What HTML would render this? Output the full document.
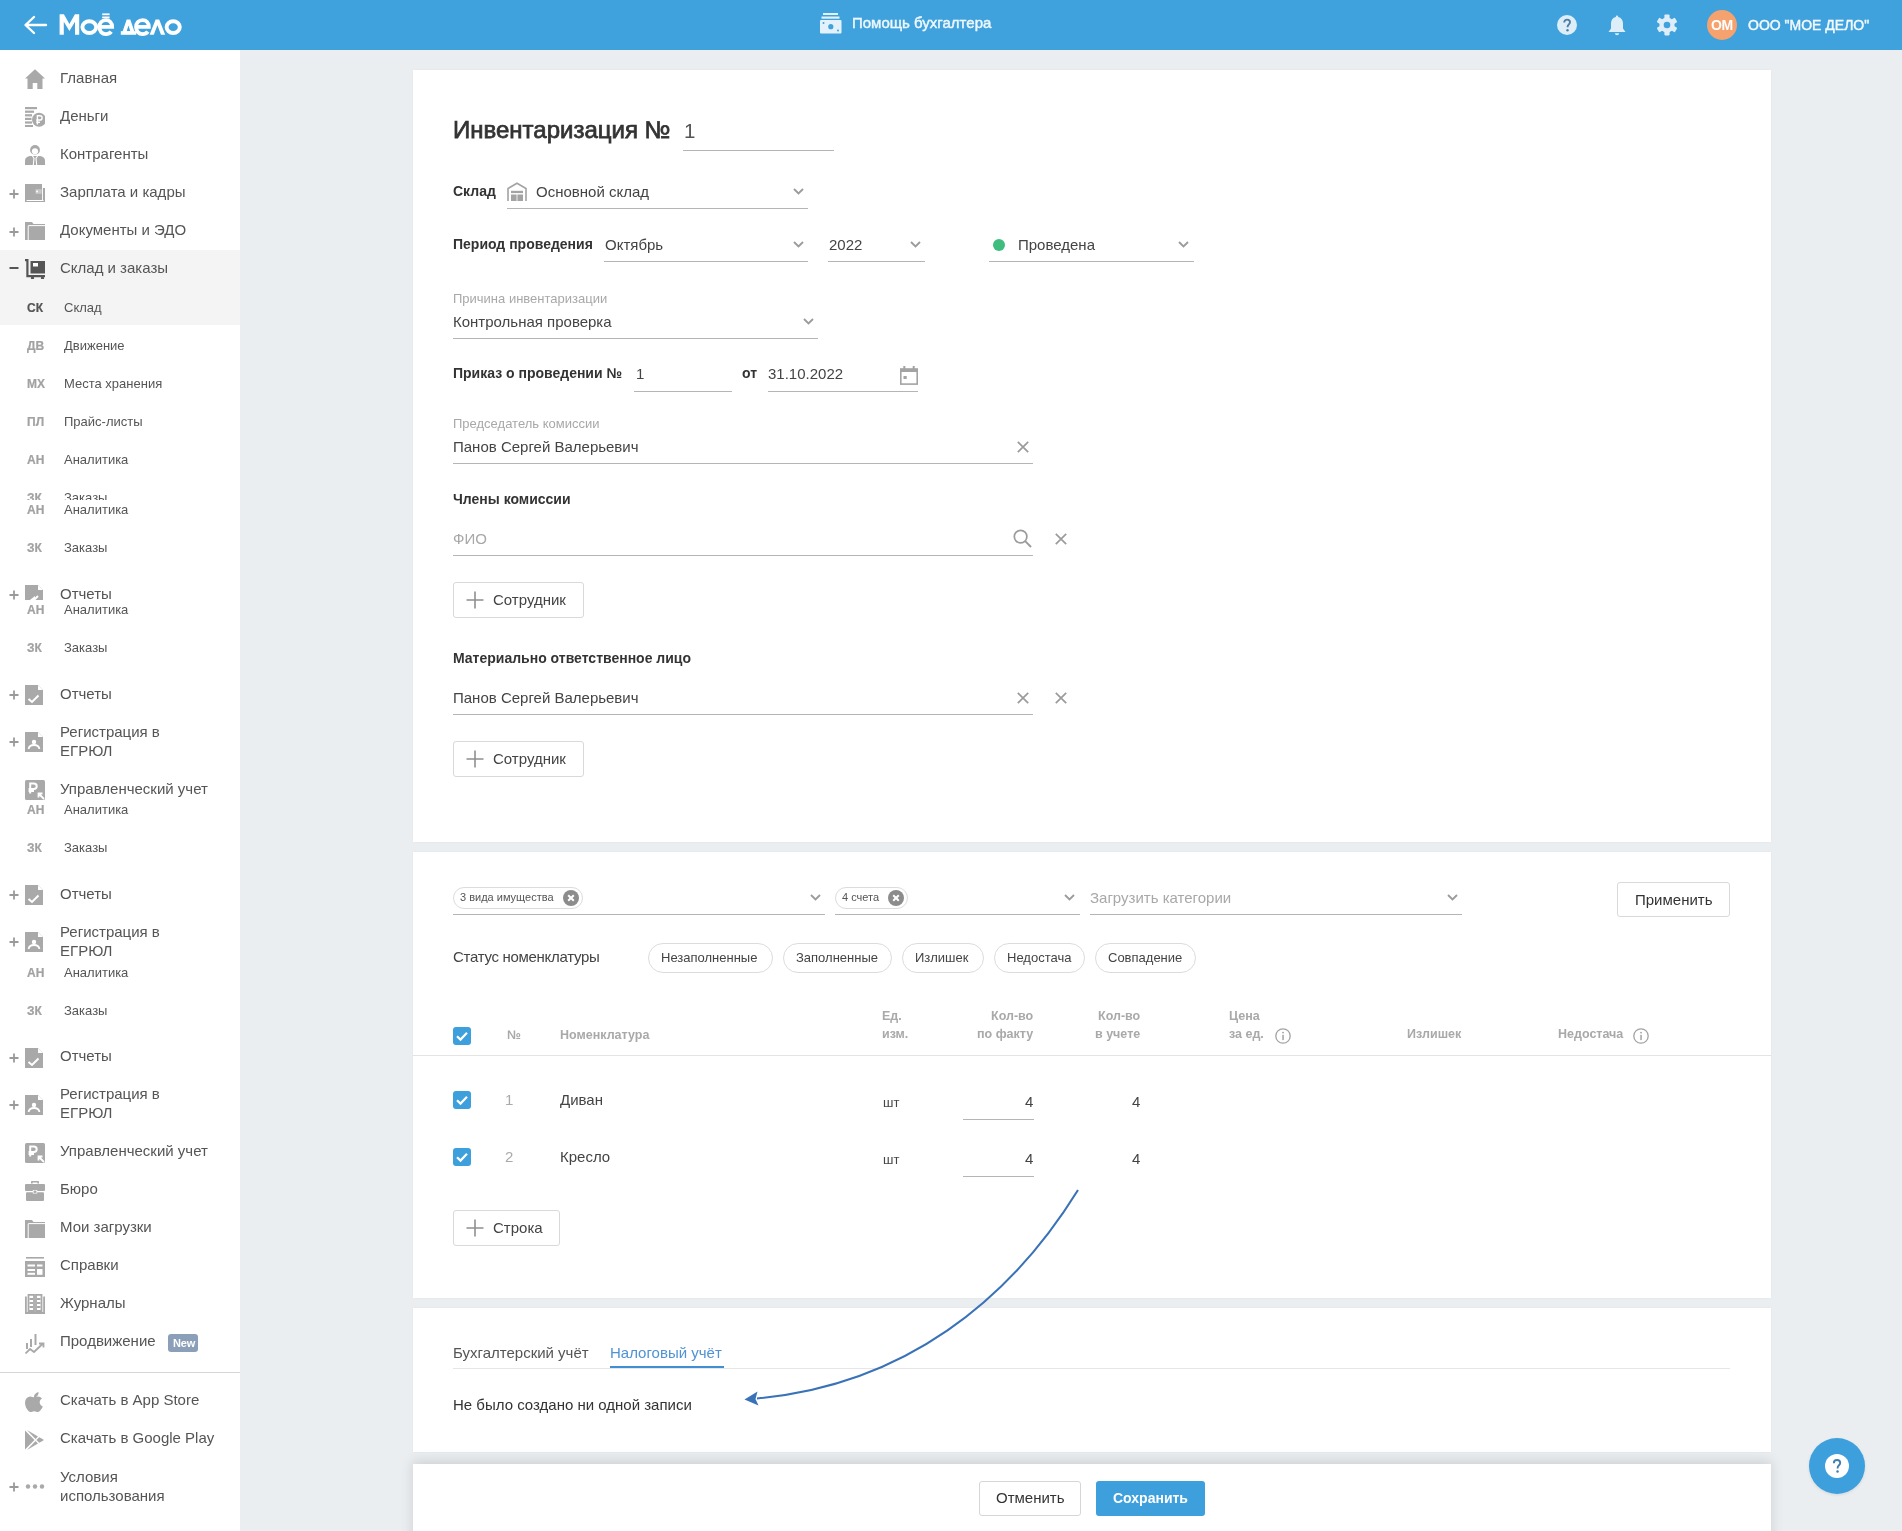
<!DOCTYPE html>
<html lang="ru"><head><meta charset="utf-8"><title>Инвентаризация</title>
<style>
*{margin:0;padding:0;box-sizing:border-box}
html,body{width:1902px;height:1531px;overflow:hidden;background:#ebeef1;font-family:"Liberation Sans",sans-serif}
.a{position:absolute}
.t{position:absolute;white-space:nowrap;line-height:1;will-change:transform}
</style></head><body>
<div class="a" style="left:0px;top:50px;width:240px;height:1481px;background:#fff"></div>
<svg class="a" style="left:25px;top:69px;" width="20" height="20" viewBox="0 0 20 20"><path d="M10 0.3 L20 9.5 H17.5 V20 H12.3 V14 H7.7 V20 H2.5 V9.5 H0 Z" fill="#a9a9a9"/></svg>
<div class="t" style="left:60px;top:69.50px;font-size:15px;color:#555;">Главная</div>
<svg class="a" style="left:25px;top:107px;" width="20" height="20" viewBox="0 0 20 20"><g fill="#a9a9a9"><rect x="0" y="0" width="12" height="2.2"/><rect x="0" y="3.6" width="9" height="2.2"/><rect x="0" y="7.2" width="7" height="2.2"/><rect x="0" y="10.8" width="6.5" height="2.2"/><rect x="0" y="14.4" width="7" height="2.2"/><rect x="0" y="18" width="8" height="2"/><circle cx="14" cy="12.8" r="7"/></g><path d="M12.4 17.5 V8.8 H14.9 C16.3 8.8 17.1 9.7 17.1 10.9 C17.1 12.1 16.3 13 14.9 13 H11.2 M11.2 15.2 H15" fill="none" stroke="#fff" stroke-width="1.4"/></svg>
<div class="t" style="left:60px;top:107.50px;font-size:15px;color:#555;">Деньги</div>
<svg class="a" style="left:25px;top:145px;" width="20" height="20" viewBox="0 0 20 20"><circle cx="10" cy="4.9" r="4.9" fill="#a9a9a9"/><circle cx="10" cy="6.3" r="3.1" fill="#fff"/><path d="M0 20 V15.6 C0 12.9 2.2 11.3 5 11 H15 C17.8 11.3 20 12.9 20 15.6 V20 Z" fill="#a9a9a9"/><path d="M7.4 11 L9 13.2 L8.3 20 M12.6 11 L11 13.2 L11.7 20" fill="none" stroke="#fff" stroke-width="1.1"/></svg>
<div class="t" style="left:60px;top:146.00px;font-size:15px;color:#555;">Контрагенты</div>
<svg class="a" style="left:25px;top:184px;" width="20" height="20" viewBox="0 0 20 20"><g fill="#a9a9a9"><path d="M0 0 H17 V4 H20 V18 H0 Z"/></g><path d="M1.6 16.5 H18.5" stroke="#fff" stroke-width="1"/><path d="M11 4.5 H17 V10 H11 Z" fill="#fff" opacity="0.0"/><rect x="10.5" y="5.2" width="6.2" height="4.6" fill="#fff" opacity="0.35"/><circle cx="12" cy="7.5" r="1" fill="#fff"/><path d="M17.5 4 V16.5" stroke="#fff" stroke-width="0.9"/></svg>
<div class="t" style="left:60px;top:183.90px;font-size:15px;color:#555;">Зарплата и кадры</div>
<svg class="a" style="left:9px;top:189px;" width="10" height="10" viewBox="0 0 10 10"><path d="M5 0.5 V9.5 M0.5 5 H9.5" stroke="#9a9a9a" stroke-width="1.8"/></svg>
<svg class="a" style="left:25px;top:222px;" width="20" height="20" viewBox="0 0 20 20"><g fill="#a9a9a9"><path d="M0 0 H7 L8.5 2 H20 V18 H0 Z"/></g><path d="M3.2 4 V18" stroke="#fff" stroke-width="1"/><path d="M3.2 3.6 H20" stroke="#fff" stroke-width="1"/></svg>
<div class="t" style="left:60px;top:221.80px;font-size:15px;color:#555;">Документы и ЭДО</div>
<svg class="a" style="left:9px;top:227px;" width="10" height="10" viewBox="0 0 10 10"><path d="M5 0.5 V9.5 M0.5 5 H9.5" stroke="#9a9a9a" stroke-width="1.8"/></svg>
<div class="a" style="left:0px;top:250px;width:240px;height:75px;background:#f4f4f4"></div>
<svg class="a" style="left:25px;top:259px;" width="20" height="20" viewBox="0 0 20 20"><g fill="#555"><path d="M0 0 H3.5 V16 H20 V18.2 H1.3 V2.2 H0 Z"/><rect x="5.5" y="2" width="14.5" height="12.5"/><circle cx="7.5" cy="19" r="1.6"/><circle cx="17.5" cy="19" r="1.6"/></g><rect x="8" y="4" width="5" height="3.5" fill="#fff"/></svg>
<svg class="a" style="left:9px;top:267px;" width="10" height="3" viewBox="0 0 10 3"><rect x="0.5" y="0" width="9" height="2" fill="#555"/></svg>
<div class="t" style="left:60px;top:259.50px;font-size:15px;color:#555;">Склад и заказы</div>
<div class="t" style="left:27.2px;top:302.04px;font-size:12px;font-weight:700;color:#555;-webkit-text-stroke:0.2px">СК</div>
<div class="t" style="left:63.6px;top:301.20px;font-size:13px;color:#555;">Склад</div>
<div class="t" style="left:27.2px;top:339.84px;font-size:12px;font-weight:700;color:#a2a2a2;-webkit-text-stroke:0.2px">ДВ</div>
<div class="t" style="left:63.6px;top:339.00px;font-size:13px;color:#555;">Движение</div>
<div class="t" style="left:27.2px;top:377.74px;font-size:12px;font-weight:700;color:#a2a2a2;-webkit-text-stroke:0.2px">МХ</div>
<div class="t" style="left:63.6px;top:376.90px;font-size:13px;color:#555;">Места хранения</div>
<div class="t" style="left:27.2px;top:415.64px;font-size:12px;font-weight:700;color:#a2a2a2;-webkit-text-stroke:0.2px">ПЛ</div>
<div class="t" style="left:63.6px;top:414.80px;font-size:13px;color:#555;">Прайс-листы</div>
<div class="t" style="left:27.2px;top:454.04px;font-size:12px;font-weight:700;color:#a2a2a2;-webkit-text-stroke:0.2px">АН</div>
<div class="t" style="left:63.6px;top:453.20px;font-size:13px;color:#555;">Аналитика</div>
<div class="a" style="left:0;top:480px;width:240px;height:20px;overflow:hidden"><div class="a" style="left:0;top:-480px;width:240px;height:600px"><div class="t" style="left:27.2px;top:492.04px;font-size:12px;font-weight:700;color:#a2a2a2;-webkit-text-stroke:0.2px">ЗК</div>
<div class="t" style="left:63.6px;top:491.20px;font-size:13px;color:#555;">Заказы</div>
</div></div><div class="t" style="left:27.2px;top:504.04px;font-size:12px;font-weight:700;color:#a2a2a2;-webkit-text-stroke:0.2px">АН</div>
<div class="t" style="left:63.6px;top:503.20px;font-size:13px;color:#555;">Аналитика</div>
<div class="t" style="left:27.2px;top:542.04px;font-size:12px;font-weight:700;color:#a2a2a2;-webkit-text-stroke:0.2px">ЗК</div>
<div class="t" style="left:63.6px;top:541.20px;font-size:13px;color:#555;">Заказы</div>
<div class="a" style="left:0;top:570px;width:240px;height:30px;overflow:hidden"><div class="a" style="left:0;top:-570px;width:240px;height:700px"><svg class="a" style="left:25px;top:585px;" width="20" height="20" viewBox="0 0 20 20"><path d="M0 0 H13 L18 5 V20 H0 Z" fill="#a9a9a9"/><path d="M13 0 V5 H18" fill="#fff"/><path d="M4 17 L9 13 V15 L13 11" fill="none" stroke="#fff" stroke-width="2"/></svg>
<div class="t" style="left:60px;top:585.70px;font-size:15px;color:#555;">Отчеты</div>
<svg class="a" style="left:9px;top:590px;" width="10" height="10" viewBox="0 0 10 10"><path d="M5 0.5 V9.5 M0.5 5 H9.5" stroke="#9a9a9a" stroke-width="1.8"/></svg>
</div></div><div class="t" style="left:27.2px;top:604.04px;font-size:12px;font-weight:700;color:#a2a2a2;-webkit-text-stroke:0.2px">АН</div>
<div class="t" style="left:63.6px;top:603.20px;font-size:13px;color:#555;">Аналитика</div>
<div class="t" style="left:27.2px;top:642.14px;font-size:12px;font-weight:700;color:#a2a2a2;-webkit-text-stroke:0.2px">ЗК</div>
<div class="t" style="left:63.6px;top:641.30px;font-size:13px;color:#555;">Заказы</div>
<svg class="a" style="left:25px;top:685px;" width="20" height="20" viewBox="0 0 20 20"><path d="M0 0 H13 L18 5 V20 H0 Z" fill="#a9a9a9"/><path d="M13 0 V5 H18" fill="#fff"/><path d="M3.5 14 L7 17 L13.5 10.5" fill="none" stroke="#fff" stroke-width="2"/></svg>
<div class="t" style="left:60px;top:685.60px;font-size:15px;color:#555;">Отчеты</div>
<svg class="a" style="left:9px;top:690px;" width="10" height="10" viewBox="0 0 10 10"><path d="M5 0.5 V9.5 M0.5 5 H9.5" stroke="#9a9a9a" stroke-width="1.8"/></svg>
<svg class="a" style="left:25px;top:732px;" width="20" height="20" viewBox="0 0 20 20"><path d="M0 0 H13 L18 5 V20 H0 Z" fill="#a9a9a9"/><path d="M13 0 V5 H18" fill="#fff"/><circle cx="9" cy="10" r="2.2" fill="#fff"/><path d="M3.6 17 C4 14 6 13 9 13 C12 13 14 14 14.4 17" fill="none" stroke="#fff" stroke-width="1.8"/></svg>
<div class="t" style="left:60px;top:723.50px;font-size:15px;color:#555;">Регистрация в</div>
<div class="t" style="left:60px;top:742.50px;font-size:15px;color:#555;">ЕГРЮЛ</div>
<svg class="a" style="left:9px;top:737px;" width="10" height="10" viewBox="0 0 10 10"><path d="M5 0.5 V9.5 M0.5 5 H9.5" stroke="#9a9a9a" stroke-width="1.8"/></svg>
<div class="a" style="left:0;top:770px;width:240px;height:30px;overflow:hidden"><div class="a" style="left:0;top:-770px;width:240px;height:900px"><svg class="a" style="left:25px;top:780px;" width="20" height="20" viewBox="0 0 20 20"><rect x="0" y="0" width="20" height="20" rx="1.5" fill="#a9a9a9"/><path d="M5.2 13.5 V3.5 H8.8 C10.6 3.5 11.7 4.6 11.7 6.2 C11.7 7.8 10.6 8.9 8.8 8.9 H3.6 M3.6 11 H9" fill="none" stroke="#fff" stroke-width="2"/><path d="M19 19 L13.5 13.5 M13.5 17.5 V13.5 H17.5" fill="none" stroke="#fff" stroke-width="1.8"/></svg>
<div class="t" style="left:60px;top:780.70px;font-size:15px;color:#555;">Управленческий учет</div>
</div></div><div class="t" style="left:27.2px;top:803.84px;font-size:12px;font-weight:700;color:#a2a2a2;-webkit-text-stroke:0.2px">АН</div>
<div class="t" style="left:63.6px;top:803.00px;font-size:13px;color:#555;">Аналитика</div>
<div class="t" style="left:27.2px;top:842.14px;font-size:12px;font-weight:700;color:#a2a2a2;-webkit-text-stroke:0.2px">ЗК</div>
<div class="t" style="left:63.6px;top:841.30px;font-size:13px;color:#555;">Заказы</div>
<svg class="a" style="left:25px;top:885px;" width="20" height="20" viewBox="0 0 20 20"><path d="M0 0 H13 L18 5 V20 H0 Z" fill="#a9a9a9"/><path d="M13 0 V5 H18" fill="#fff"/><path d="M3.5 14 L7 17 L13.5 10.5" fill="none" stroke="#fff" stroke-width="2"/></svg>
<div class="t" style="left:60px;top:885.60px;font-size:15px;color:#555;">Отчеты</div>
<svg class="a" style="left:9px;top:890px;" width="10" height="10" viewBox="0 0 10 10"><path d="M5 0.5 V9.5 M0.5 5 H9.5" stroke="#9a9a9a" stroke-width="1.8"/></svg>
<svg class="a" style="left:25px;top:932px;" width="20" height="20" viewBox="0 0 20 20"><path d="M0 0 H13 L18 5 V20 H0 Z" fill="#a9a9a9"/><path d="M13 0 V5 H18" fill="#fff"/><circle cx="9" cy="10" r="2.2" fill="#fff"/><path d="M3.6 17 C4 14 6 13 9 13 C12 13 14 14 14.4 17" fill="none" stroke="#fff" stroke-width="1.8"/></svg>
<div class="t" style="left:60px;top:923.50px;font-size:15px;color:#555;">Регистрация в</div>
<div class="t" style="left:60px;top:942.50px;font-size:15px;color:#555;">ЕГРЮЛ</div>
<svg class="a" style="left:9px;top:937px;" width="10" height="10" viewBox="0 0 10 10"><path d="M5 0.5 V9.5 M0.5 5 H9.5" stroke="#9a9a9a" stroke-width="1.8"/></svg>
<div class="t" style="left:27.2px;top:966.64px;font-size:12px;font-weight:700;color:#a2a2a2;-webkit-text-stroke:0.2px">АН</div>
<div class="t" style="left:63.6px;top:965.80px;font-size:13px;color:#555;">Аналитика</div>
<div class="t" style="left:27.2px;top:1004.54px;font-size:12px;font-weight:700;color:#a2a2a2;-webkit-text-stroke:0.2px">ЗК</div>
<div class="t" style="left:63.6px;top:1003.70px;font-size:13px;color:#555;">Заказы</div>
<svg class="a" style="left:25px;top:1048px;" width="20" height="20" viewBox="0 0 20 20"><path d="M0 0 H13 L18 5 V20 H0 Z" fill="#a9a9a9"/><path d="M13 0 V5 H18" fill="#fff"/><path d="M3.5 14 L7 17 L13.5 10.5" fill="none" stroke="#fff" stroke-width="2"/></svg>
<div class="t" style="left:60px;top:1048.00px;font-size:15px;color:#555;">Отчеты</div>
<svg class="a" style="left:9px;top:1053px;" width="10" height="10" viewBox="0 0 10 10"><path d="M5 0.5 V9.5 M0.5 5 H9.5" stroke="#9a9a9a" stroke-width="1.8"/></svg>
<svg class="a" style="left:25px;top:1095px;" width="20" height="20" viewBox="0 0 20 20"><path d="M0 0 H13 L18 5 V20 H0 Z" fill="#a9a9a9"/><path d="M13 0 V5 H18" fill="#fff"/><circle cx="9" cy="10" r="2.2" fill="#fff"/><path d="M3.6 17 C4 14 6 13 9 13 C12 13 14 14 14.4 17" fill="none" stroke="#fff" stroke-width="1.8"/></svg>
<div class="t" style="left:60px;top:1085.90px;font-size:15px;color:#555;">Регистрация в</div>
<div class="t" style="left:60px;top:1104.90px;font-size:15px;color:#555;">ЕГРЮЛ</div>
<svg class="a" style="left:9px;top:1100px;" width="10" height="10" viewBox="0 0 10 10"><path d="M5 0.5 V9.5 M0.5 5 H9.5" stroke="#9a9a9a" stroke-width="1.8"/></svg>
<svg class="a" style="left:25px;top:1143px;" width="20" height="20" viewBox="0 0 20 20"><rect x="0" y="0" width="20" height="20" rx="1.5" fill="#a9a9a9"/><path d="M5.2 13.5 V3.5 H8.8 C10.6 3.5 11.7 4.6 11.7 6.2 C11.7 7.8 10.6 8.9 8.8 8.9 H3.6 M3.6 11 H9" fill="none" stroke="#fff" stroke-width="2"/><path d="M19 19 L13.5 13.5 M13.5 17.5 V13.5 H17.5" fill="none" stroke="#fff" stroke-width="1.8"/></svg>
<div class="t" style="left:60px;top:1143.30px;font-size:15px;color:#555;">Управленческий учет</div>
<svg class="a" style="left:25px;top:1181px;" width="20" height="20" viewBox="0 0 20 20"><g fill="#a9a9a9"><path d="M6 2.5 V1 C6 0.4 6.4 0 7 0 H13 C13.6 0 14 0.4 14 1 V2.5 H12.3 V1.6 H7.7 V2.5 Z"/><rect x="0" y="3" width="20" height="7" rx="1"/><rect x="1" y="11.2" width="18" height="8.8" rx="1"/></g><rect x="7.8" y="9" width="4.4" height="3.5" fill="#fff"/><rect x="8.6" y="9.6" width="2.8" height="2.3" fill="#a9a9a9"/></svg>
<div class="t" style="left:60px;top:1181.20px;font-size:15px;color:#555;">Бюро</div>
<svg class="a" style="left:25px;top:1220px;" width="20" height="20" viewBox="0 0 20 20"><g fill="#a9a9a9"><path d="M0 0 H7 L8.5 2 H20 V18 H0 Z"/></g><path d="M3.2 4 V18" stroke="#fff" stroke-width="1"/><path d="M3.2 3.6 H20" stroke="#fff" stroke-width="1"/></svg>
<div class="t" style="left:60px;top:1219.10px;font-size:15px;color:#555;">Мои загрузки</div>
<svg class="a" style="left:25px;top:1257px;" width="20" height="20" viewBox="0 0 20 20"><g fill="#a9a9a9"><rect x="1" y="0" width="18" height="1.6"/><rect x="0" y="4" width="20" height="16"/></g><g fill="#fff"><rect x="2.5" y="7.5" width="7.5" height="2"/><rect x="12" y="7.5" width="5.5" height="2"/><rect x="2.5" y="12" width="7.5" height="2"/><rect x="2.5" y="15.8" width="7.5" height="2"/><rect x="12" y="12" width="5.5" height="5.8"/></g></svg>
<div class="t" style="left:60px;top:1257.00px;font-size:15px;color:#555;">Справки</div>
<svg class="a" style="left:25px;top:1294px;" width="20" height="20" viewBox="0 0 20 20"><g fill="none" stroke="#a9a9a9" stroke-width="1.8"><path d="M0.9 2.5 V19 H19.1 V2.5"/><path d="M3.5 0.9 H9 V17 H3.5 Z M11 0.9 H16.5 V17 H11 Z"/></g><g fill="#a9a9a9"><rect x="4.5" y="4" width="3.5" height="2"/><rect x="4.5" y="8" width="3.5" height="2"/><rect x="4.5" y="12" width="3.5" height="2"/><rect x="12" y="4" width="3.5" height="2"/><rect x="12" y="8" width="3.5" height="2"/><rect x="12" y="12" width="3.5" height="2"/><rect x="9" y="19" width="2" height="1.5"/></g></svg>
<div class="t" style="left:60px;top:1294.80px;font-size:15px;color:#555;">Журналы</div>
<svg class="a" style="left:25px;top:1334px;" width="20" height="20" viewBox="0 0 20 20"><g fill="#a9a9a9"><rect x="1" y="9" width="2" height="6"/><rect x="5" y="5" width="2" height="8"/><rect x="9.5" y="0" width="2" height="11"/></g><path d="M0.5 19.5 L5 15 L9 18 L18 9.5 M14 9.5 H18.5 V13.5" fill="none" stroke="#a9a9a9" stroke-width="1.8"/></svg>
<div class="t" style="left:60px;top:1333.30px;font-size:15px;color:#555;">Продвижение</div>
<div class="a" style="left:168px;top:1334px;width:30px;height:18px;background:#8c9fb9;border-radius:3px"></div>
<div class="t" style="left:172.5px;top:1338.39px;font-size:11px;font-weight:700;color:#fff;letter-spacing:-0.2px">New</div>
<div class="a" style="left:0px;top:1372px;width:240px;height:1px;background:#d6d6d6"></div>
<svg class="a" style="left:25px;top:1392px;" width="20" height="20" viewBox="0 0 20 20"><path d="M13.6 0.2 C13.7 1.6 13.2 2.9 12.3 3.9 C11.5 4.8 10.2 5.5 9 5.4 C8.8 4.1 9.4 2.7 10.2 1.9 C11.1 0.9 12.5 0.2 13.6 0.2 Z M17.8 14.4 C17.3 15.6 17 16.1 16.4 17.1 C15.5 18.4 14.3 20 12.8 20 C11.4 20 11.1 19.2 9.2 19.2 C7.3 19.2 6.9 20 5.5 20 C4 20 2.9 18.6 2.1 17.3 C-0.3 13.6 -0.5 9.3 1 7 C2 5.3 3.7 4.4 5.3 4.4 C6.9 4.4 7.9 5.3 9.3 5.3 C10.6 5.3 11.4 4.4 13.1 4.4 C14.5 4.4 16 5.2 17 6.5 C13.5 8.4 14.1 13.3 17.8 14.4 Z" fill="#a9a9a9"/></svg>
<div class="t" style="left:60px;top:1392.10px;font-size:15px;color:#555;">Скачать в App Store</div>
<svg class="a" style="left:25px;top:1430px;" width="20" height="20" viewBox="0 0 20 20"><path d="M0 0.5 V19.5 L9.5 10 Z" fill="#a9a9a9"/><path d="M2 0 L13 6.5 L10.5 9 Z M2 20 L13 13.5 L10.5 11 Z" fill="#a9a9a9"/><path d="M14.2 7.2 L18 9.3 C18.7 9.7 18.7 10.3 18 10.7 L14.2 12.8 L11.4 10 Z" fill="#a9a9a9"/></svg>
<div class="t" style="left:60px;top:1430.00px;font-size:15px;color:#555;">Скачать в Google Play</div>
<div class="t" style="left:60px;top:1469.10px;font-size:15px;color:#555;">Условия</div>
<div class="t" style="left:60px;top:1488.00px;font-size:15px;color:#555;">использования</div>
<svg class="a" style="left:9px;top:1481.6px;" width="10" height="10" viewBox="0 0 10 10"><path d="M5 0.5 V9.5 M0.5 5 H9.5" stroke="#9a9a9a" stroke-width="1.8"/></svg>
<svg class="a" style="left:25px;top:1483px;" width="20" height="7" viewBox="0 0 20 7"><g fill="#a9a9a9"><circle cx="3" cy="3.5" r="2.2"/><circle cx="10" cy="3.5" r="2.2"/><circle cx="17" cy="3.5" r="2.2"/></g></svg>
<div class="a" style="left:413px;top:70px;width:1358px;height:772px;background:#fff;box-shadow:0 0 2px rgba(0,0,0,0.05)"></div>
<div class="t" style="left:453px;top:118.48px;font-size:24px;color:#333;-webkit-text-stroke:0.75px #333">Инвентаризация №</div>
<div class="t" style="left:683.5px;top:121.35px;font-size:20.5px;color:#555;">1</div>
<div class="a" style="left:683px;top:150px;width:151px;height:1px;background:#b5b5b5"></div>
<div class="t" style="left:453px;top:183.85px;font-size:14px;font-weight:700;color:#333;">Склад</div>
<svg class="a" style="left:507px;top:182px;" width="20" height="20" viewBox="0 0 20 20"><path d="M1 19 V6.5 L10 1.2 L19 6.5 V19" fill="none" stroke="#a3a3a3" stroke-width="1.6"/><g fill="#a3a3a3"><rect x="4" y="8.8" width="12" height="2.3"/><rect x="4" y="12.5" width="5.6" height="6.5"/><rect x="10.4" y="12.5" width="5.6" height="6.5"/></g></svg>
<div class="t" style="left:535.7px;top:183.80px;font-size:15px;color:#444;">Основной склад</div>
<svg class="a" style="left:792.5px;top:188px;" width="11" height="7" viewBox="0 0 11 7"><path d="M1 1 L5.5 5.5 L10 1" fill="none" stroke="#9b9b9b" stroke-width="1.8"/></svg>
<div class="a" style="left:507px;top:208px;width:301px;height:1px;background:#b5b5b5"></div>
<div class="t" style="left:453px;top:236.85px;font-size:14px;font-weight:700;color:#333;">Период проведения</div>
<div class="t" style="left:605px;top:236.80px;font-size:15px;color:#444;">Октябрь</div>
<svg class="a" style="left:792.5px;top:240.8px;" width="11" height="7" viewBox="0 0 11 7"><path d="M1 1 L5.5 5.5 L10 1" fill="none" stroke="#9b9b9b" stroke-width="1.8"/></svg>
<div class="a" style="left:604px;top:261px;width:204px;height:1px;background:#b5b5b5"></div>
<div class="t" style="left:828.8px;top:236.80px;font-size:15px;color:#444;">2022</div>
<svg class="a" style="left:909.5px;top:240.8px;" width="11" height="7" viewBox="0 0 11 7"><path d="M1 1 L5.5 5.5 L10 1" fill="none" stroke="#9b9b9b" stroke-width="1.8"/></svg>
<div class="a" style="left:828px;top:261px;width:97px;height:1px;background:#b5b5b5"></div>
<div class="a" style="left:993px;top:239px;width:12px;height:12px;background:#3ebd7e;border-radius:50%"></div>
<div class="t" style="left:1017.7px;top:236.80px;font-size:15px;color:#444;">Проведена</div>
<svg class="a" style="left:1178px;top:240.8px;" width="11" height="7" viewBox="0 0 11 7"><path d="M1 1 L5.5 5.5 L10 1" fill="none" stroke="#9b9b9b" stroke-width="1.8"/></svg>
<div class="a" style="left:989px;top:261px;width:205px;height:1px;background:#b5b5b5"></div>
<div class="t" style="left:453px;top:292.40px;font-size:13px;color:#a8a8a8;">Причина инвентаризации</div>
<div class="t" style="left:453px;top:313.90px;font-size:15px;color:#444;">Контрольная проверка</div>
<svg class="a" style="left:803px;top:318px;" width="11" height="7" viewBox="0 0 11 7"><path d="M1 1 L5.5 5.5 L10 1" fill="none" stroke="#9b9b9b" stroke-width="1.8"/></svg>
<div class="a" style="left:453px;top:338px;width:365px;height:1px;background:#b5b5b5"></div>
<div class="t" style="left:453px;top:366.35px;font-size:14px;font-weight:700;color:#333;">Приказ о проведении №</div>
<div class="t" style="left:635.8px;top:365.70px;font-size:15px;color:#444;">1</div>
<div class="a" style="left:634px;top:391px;width:98px;height:1px;background:#b5b5b5"></div>
<div class="t" style="left:742.3px;top:366.35px;font-size:14px;font-weight:700;color:#333;">от</div>
<div class="t" style="left:768px;top:365.70px;font-size:15px;color:#444;">31.10.2022</div>
<svg class="a" style="left:900px;top:365.5px;" width="18" height="19" viewBox="0 0 18 19"><g fill="#a3a3a3"><rect x="0" y="2.5" width="18" height="3.5"/><rect x="3.3" y="0" width="2" height="3"/><rect x="12.7" y="0" width="2" height="3"/><rect x="3.5" y="10" width="3.2" height="3"/></g><rect x="0.8" y="3.2" width="16.4" height="14.9" fill="none" stroke="#a3a3a3" stroke-width="1.6"/></svg>
<div class="a" style="left:768px;top:391px;width:150px;height:1px;background:#b5b5b5"></div>
<div class="t" style="left:453px;top:417.20px;font-size:13px;color:#a8a8a8;">Председатель комиссии</div>
<div class="t" style="left:453px;top:438.70px;font-size:15px;color:#444;">Панов Сергей Валерьевич</div>
<svg class="a" style="left:1016.8px;top:441.0px;" width="12" height="12" viewBox="0 0 12 12"><path d="M0.8 0.8 L11.2 11.2 M11.2 0.8 L0.8 11.2" stroke="#9b9b9b" stroke-width="1.7"/></svg>
<div class="a" style="left:453px;top:463px;width:580px;height:1px;background:#b5b5b5"></div>
<div class="t" style="left:453px;top:491.55px;font-size:14px;font-weight:700;color:#333;">Члены комиссии</div>
<div class="t" style="left:453px;top:530.70px;font-size:15px;color:#a8a8a8;">ФИО</div>
<svg class="a" style="left:1013px;top:529px;" width="19" height="19" viewBox="0 0 19 19"><circle cx="7.6" cy="7.6" r="6.3" fill="none" stroke="#9b9b9b" stroke-width="1.7"/><path d="M12.2 12.2 L18 18" stroke="#9b9b9b" stroke-width="1.9"/></svg>
<svg class="a" style="left:1055.0px;top:532.5px;" width="12" height="12" viewBox="0 0 12 12"><path d="M0.8 0.8 L11.2 11.2 M11.2 0.8 L0.8 11.2" stroke="#9b9b9b" stroke-width="1.7"/></svg>
<div class="a" style="left:453px;top:555px;width:580px;height:1px;background:#b5b5b5"></div>
<div class="a" style="left:453px;top:582px;width:131px;height:36px;background:#fff;border:1px solid #d9d9d9;border-radius:3px"></div>
<svg class="a" style="left:466px;top:591.0px;" width="18" height="18" viewBox="0 0 18 18"><path d="M9 0.5 V17.5 M0.5 9 H17.5" stroke="#8f8f8f" stroke-width="1.6"/></svg>
<div class="t" style="left:492.7px;top:592.00px;font-size:15px;color:#444;">Сотрудник</div>
<div class="t" style="left:453px;top:650.55px;font-size:14px;font-weight:700;color:#333;">Материально ответственное лицо</div>
<div class="t" style="left:453px;top:689.50px;font-size:15px;color:#444;">Панов Сергей Валерьевич</div>
<svg class="a" style="left:1016.8px;top:691.8px;" width="12" height="12" viewBox="0 0 12 12"><path d="M0.8 0.8 L11.2 11.2 M11.2 0.8 L0.8 11.2" stroke="#9b9b9b" stroke-width="1.7"/></svg>
<svg class="a" style="left:1055.0px;top:691.8px;" width="12" height="12" viewBox="0 0 12 12"><path d="M0.8 0.8 L11.2 11.2 M11.2 0.8 L0.8 11.2" stroke="#9b9b9b" stroke-width="1.7"/></svg>
<div class="a" style="left:453px;top:714px;width:580px;height:1px;background:#b5b5b5"></div>
<div class="a" style="left:453px;top:741px;width:131px;height:36px;background:#fff;border:1px solid #d9d9d9;border-radius:3px"></div>
<svg class="a" style="left:466px;top:750.0px;" width="18" height="18" viewBox="0 0 18 18"><path d="M9 0.5 V17.5 M0.5 9 H17.5" stroke="#8f8f8f" stroke-width="1.6"/></svg>
<div class="t" style="left:492.7px;top:751.00px;font-size:15px;color:#444;">Сотрудник</div>
<div class="a" style="left:413px;top:852px;width:1358px;height:446px;background:#fff;box-shadow:0 0 2px rgba(0,0,0,0.05)"></div>
<div class="a" style="left:453px;top:887px;width:130px;height:22px;background:#fff;border:1px solid #dcdcdc;border-radius:11px"></div>
<div class="t" style="left:460px;top:892.09px;font-size:11px;color:#555;">3 вида имущества</div>
<svg class="a" style="left:563px;top:890px;" width="16" height="16" viewBox="0 0 16 16"><circle cx="8" cy="8" r="8" fill="#8c8c8c"/><path d="M5.2 5.2 L10.8 10.8 M10.8 5.2 L5.2 10.8" stroke="#fff" stroke-width="2"/></svg>
<svg class="a" style="left:809.5px;top:894px;" width="11" height="7" viewBox="0 0 11 7"><path d="M1 1 L5.5 5.5 L10 1" fill="none" stroke="#9b9b9b" stroke-width="1.8"/></svg>
<div class="a" style="left:453px;top:914px;width:372px;height:1px;background:#b5b5b5"></div>
<div class="a" style="left:835px;top:887px;width:72.5px;height:22px;background:#fff;border:1px solid #dcdcdc;border-radius:11px"></div>
<div class="t" style="left:842px;top:892.09px;font-size:11px;color:#555;">4 счета</div>
<svg class="a" style="left:887.8px;top:890px;" width="16" height="16" viewBox="0 0 16 16"><circle cx="8" cy="8" r="8" fill="#8c8c8c"/><path d="M5.2 5.2 L10.8 10.8 M10.8 5.2 L5.2 10.8" stroke="#fff" stroke-width="2"/></svg>
<svg class="a" style="left:1064px;top:894px;" width="11" height="7" viewBox="0 0 11 7"><path d="M1 1 L5.5 5.5 L10 1" fill="none" stroke="#9b9b9b" stroke-width="1.8"/></svg>
<div class="a" style="left:835px;top:914px;width:245px;height:1px;background:#b5b5b5"></div>
<div class="t" style="left:1090.3px;top:889.50px;font-size:15px;color:#a8a8a8;">Загрузить категории</div>
<svg class="a" style="left:1447px;top:894px;" width="11" height="7" viewBox="0 0 11 7"><path d="M1 1 L5.5 5.5 L10 1" fill="none" stroke="#9b9b9b" stroke-width="1.8"/></svg>
<div class="a" style="left:1090px;top:914px;width:372px;height:1px;background:#b5b5b5"></div>
<div class="a" style="left:1617px;top:882px;width:113px;height:35px;background:#fff;border:1px solid #d9d9d9;border-radius:3px"></div>
<div class="t" style="left:1634.6px;top:891.70px;font-size:15px;color:#333;">Применить</div>
<div class="t" style="left:453px;top:949.00px;font-size:15px;color:#444;letter-spacing:-0.3px">Статус номенклатуры</div>
<div class="a" style="left:648px;top:943px;width:125px;height:30px;background:#fff;border:1px solid #dcdcdc;border-radius:15px"></div>
<div class="t" style="left:661.3px;top:951.20px;font-size:13px;color:#444;">Незаполненные</div>
<div class="a" style="left:783px;top:943px;width:109px;height:30px;background:#fff;border:1px solid #dcdcdc;border-radius:15px"></div>
<div class="t" style="left:796.3px;top:951.20px;font-size:13px;color:#444;">Заполненные</div>
<div class="a" style="left:902px;top:943px;width:82px;height:30px;background:#fff;border:1px solid #dcdcdc;border-radius:15px"></div>
<div class="t" style="left:915.3px;top:951.20px;font-size:13px;color:#444;">Излишек</div>
<div class="a" style="left:994px;top:943px;width:91px;height:30px;background:#fff;border:1px solid #dcdcdc;border-radius:15px"></div>
<div class="t" style="left:1007.3px;top:951.20px;font-size:13px;color:#444;">Недостача</div>
<div class="a" style="left:1095px;top:943px;width:101px;height:30px;background:#fff;border:1px solid #dcdcdc;border-radius:15px"></div>
<div class="t" style="left:1108.3px;top:951.20px;font-size:13px;color:#444;">Совпадение</div>
<svg class="a" style="left:453px;top:1027px;" width="18" height="18" viewBox="0 0 18 18"><rect width="18" height="18" rx="3" fill="#3d9fdc"/><path d="M4 9.2 L7.5 12.6 L14 5.8" fill="none" stroke="#fff" stroke-width="2.2"/></svg>
<div class="t" style="left:507px;top:1028.62px;font-size:12.5px;font-weight:700;color:#a9a9a9;">№</div>
<div class="t" style="left:560.2px;top:1028.62px;font-size:12.5px;font-weight:700;color:#a9a9a9;">Номенклатура</div>
<div class="t" style="left:882px;top:1009.62px;font-size:12.5px;font-weight:700;color:#a9a9a9;">Ед.</div>
<div class="t" style="left:882px;top:1028.22px;font-size:12.5px;font-weight:700;color:#a9a9a9;">изм.</div>
<div class="t" style="right:869px;top:1009.62px;font-size:12.5px;font-weight:700;color:#a9a9a9;text-align:right;">Кол-во</div>
<div class="t" style="right:869px;top:1028.22px;font-size:12.5px;font-weight:700;color:#a9a9a9;text-align:right;">по факту</div>
<div class="t" style="right:761.5px;top:1009.62px;font-size:12.5px;font-weight:700;color:#a9a9a9;text-align:right;">Кол-во</div>
<div class="t" style="right:761.5px;top:1028.22px;font-size:12.5px;font-weight:700;color:#a9a9a9;text-align:right;">в учете</div>
<div class="t" style="left:1229.4px;top:1009.62px;font-size:12.5px;font-weight:700;color:#a9a9a9;">Цена</div>
<div class="t" style="left:1229.4px;top:1028.22px;font-size:12.5px;font-weight:700;color:#a9a9a9;">за ед.</div>
<svg class="a" style="left:1275px;top:1028px;" width="16" height="16" viewBox="0 0 16 16"><circle cx="8" cy="8" r="7.2" fill="none" stroke="#a3a3a3" stroke-width="1.3"/><rect x="7.3" y="6.8" width="1.5" height="5.3" fill="#a3a3a3"/><circle cx="8.05" cy="4.6" r="0.95" fill="#a3a3a3"/></svg>
<div class="t" style="left:1407px;top:1028.22px;font-size:12.5px;font-weight:700;color:#a9a9a9;">Излишек</div>
<div class="t" style="left:1557.5px;top:1028.22px;font-size:12.5px;font-weight:700;color:#a9a9a9;">Недостача</div>
<svg class="a" style="left:1633px;top:1028px;" width="16" height="16" viewBox="0 0 16 16"><circle cx="8" cy="8" r="7.2" fill="none" stroke="#a3a3a3" stroke-width="1.3"/><rect x="7.3" y="6.8" width="1.5" height="5.3" fill="#a3a3a3"/><circle cx="8.05" cy="4.6" r="0.95" fill="#a3a3a3"/></svg>
<div class="a" style="left:413px;top:1055px;width:1358px;height:1px;background:#e3e3e3"></div>
<svg class="a" style="left:453px;top:1091px;" width="18" height="18" viewBox="0 0 18 18"><rect width="18" height="18" rx="3" fill="#3d9fdc"/><path d="M4 9.2 L7.5 12.6 L14 5.8" fill="none" stroke="#fff" stroke-width="2.2"/></svg>
<div class="t" style="left:504.7px;top:1092.30px;font-size:15px;color:#aaa;">1</div>
<div class="t" style="left:560.2px;top:1092.30px;font-size:15px;color:#444;">Диван</div>
<div class="t" style="left:882.6px;top:1095.50px;font-size:13px;color:#444;">шт</div>
<div class="t" style="right:869px;top:1094.30px;font-size:15px;color:#444;text-align:right;">4</div>
<div class="a" style="left:963px;top:1119px;width:71px;height:1px;background:#b5b5b5"></div>
<div class="t" style="right:761.5px;top:1094.30px;font-size:15px;color:#444;text-align:right;">4</div>
<svg class="a" style="left:453px;top:1148px;" width="18" height="18" viewBox="0 0 18 18"><rect width="18" height="18" rx="3" fill="#3d9fdc"/><path d="M4 9.2 L7.5 12.6 L14 5.8" fill="none" stroke="#fff" stroke-width="2.2"/></svg>
<div class="t" style="left:504.7px;top:1149.40px;font-size:15px;color:#aaa;">2</div>
<div class="t" style="left:560.2px;top:1149.40px;font-size:15px;color:#444;">Кресло</div>
<div class="t" style="left:882.6px;top:1152.60px;font-size:13px;color:#444;">шт</div>
<div class="t" style="right:869px;top:1151.40px;font-size:15px;color:#444;text-align:right;">4</div>
<div class="a" style="left:963px;top:1176px;width:71px;height:1px;background:#b5b5b5"></div>
<div class="t" style="right:761.5px;top:1151.40px;font-size:15px;color:#444;text-align:right;">4</div>
<div class="a" style="left:453px;top:1210px;width:107px;height:36px;background:#fff;border:1px solid #d9d9d9;border-radius:3px"></div>
<svg class="a" style="left:466px;top:1219.0px;" width="18" height="18" viewBox="0 0 18 18"><path d="M9 0.5 V17.5 M0.5 9 H17.5" stroke="#8f8f8f" stroke-width="1.6"/></svg>
<div class="t" style="left:493.2px;top:1219.50px;font-size:15px;color:#444;">Строка</div>
<div class="a" style="left:413px;top:1308px;width:1358px;height:144px;background:#fff;box-shadow:0 0 2px rgba(0,0,0,0.05)"></div>
<div class="t" style="left:452.6px;top:1344.50px;font-size:15px;color:#555;">Бухгалтерский учёт</div>
<div class="t" style="left:610.3px;top:1344.50px;font-size:15px;color:#4f93d4;">Налоговый учёт</div>
<div class="a" style="left:453px;top:1368px;width:1277px;height:1px;background:#e6e6e6"></div>
<div class="a" style="left:610px;top:1366px;width:114px;height:2px;background:#3f8fd2"></div>
<div class="t" style="left:452.6px;top:1397.00px;font-size:15px;color:#333;">Не было создано ни одной записи</div>
<div class="a" style="left:413px;top:1464px;width:1358px;height:80px;background:#fff;box-shadow:0 -3px 12px rgba(0,0,0,0.13)"></div>
<div class="a" style="left:978.5px;top:1480.5px;width:102px;height:35px;background:#fff;border:1px solid #d6d6d6;border-radius:3px"></div>
<div class="t" style="left:995.5px;top:1489.90px;font-size:15px;color:#333;">Отменить</div>
<div class="a" style="left:1096px;top:1480.5px;width:109px;height:35px;background:#3d9fdc;border-radius:3px"></div>
<div class="t" style="left:1113.4px;top:1490.75px;font-size:14px;font-weight:700;color:#fff;">Сохранить</div>
<svg class="a" style="left:0;top:0" width="1902" height="1531" viewBox="0 0 1902 1531"><path d="M1078 1190 C1010 1300 905 1385 757 1398.5" fill="none" stroke="#3a72b8" stroke-width="2.1"/><path d="M744.5 1399.5 L757.5 1391.5 L755.5 1399 L758.5 1405.5 Z" fill="#3a72b8"/></svg>
<div class="a" style="left:1809px;top:1438px;width:56px;height:56px;background:#3d9fdc;border-radius:50%;box-shadow:0 1px 3px rgba(0,0,0,0.1)"></div>
<svg class="a" style="left:1825px;top:1454px;" width="24" height="24" viewBox="0 0 24 24"><circle cx="12" cy="12" r="12" fill="#fff"/><path d="M8.8 9.3 C8.8 7.3 10.2 6 12 6 C13.8 6 15.2 7.3 15.2 9 C15.2 11.1 12.6 11.5 12.6 13.9 V14.4" fill="none" stroke="#3f7fb0" stroke-width="1.9"/><circle cx="12.5" cy="17.6" r="1.25" fill="#3f7fb0"/></svg>
<div class="a" style="left:0px;top:0px;width:1902px;height:50px;background:#3fa2dd"></div>
<svg class="a" style="left:22px;top:14px;" width="26" height="22" viewBox="0 0 26 22"><path d="M24 11 H4 M12 3 L3.5 11 L12 19" fill="none" stroke="#fff" stroke-width="2.4" stroke-linecap="round" stroke-linejoin="round"/></svg>
<svg class="a" style="left:0px;top:0px;" width="200" height="50" viewBox="0 0 200 50"><g fill="#fff" fill-rule="evenodd">
<path d="M59.6 34.8 V14.2 H63.9 L69.4 24 L74.9 14.2 H79.2 V34.8 H75 V21.8 L69.4 31 L63.8 21.8 V34.8 Z"/>
<path d="M122.4 32 L126.7 19.4 H130.3 L134.6 32 Z M126.7 31.2 L128.5 25.4 L130.3 31.2 Z"/>
<rect x="120.8" y="31.2" width="15.4" height="3.6"/>
<path d="M149.6 34.8 L155.6 19.4 H159.2 L165.2 34.8 H161 L157.4 25.2 L153.8 34.8 Z"/>
<rect x="102.2" y="13.4" width="7.4" height="1.8"/>
<rect x="102.2" y="16.5" width="7.4" height="1.8"/>
</g>
<g fill="none" stroke="#fff" stroke-width="3.9">
<ellipse cx="89.3" cy="27.1" rx="6.9" ry="5.9"/>
<path d="M111.2 31.6 C109.9 33.3 108.2 34.1 105.9 34.1 C102 34.1 99.4 31.1 99.4 27.1 C99.4 23 102 20.1 105.9 20.1 C109.6 20.1 112.1 22.8 112.1 26.9 H100"/>
<path d="M147.9 31.6 C146.6 33.3 144.9 34.1 142.6 34.1 C138.7 34.1 136.1 31.1 136.1 27.1 C136.1 23 138.7 20.1 142.6 20.1 C146.3 20.1 148.8 22.8 148.8 26.9 H136.7"/>
<ellipse cx="173.2" cy="27.1" rx="6.6" ry="5.9"/>
</g></svg>
<svg class="a" style="left:820px;top:13px;" width="22" height="21" viewBox="0 0 22 21"><g fill="#e3f1fb">
<rect x="3" y="0" width="15" height="2"/>
<rect x="1.5" y="3.5" width="18" height="2.2"/>
<rect x="0" y="7" width="21.5" height="13.5" rx="1"/>
</g>
<circle cx="10.8" cy="13.7" r="2.6" fill="#3fa2dd"/>
<circle cx="3.5" cy="10" r="1" fill="#3fa2dd"/><circle cx="18" cy="17.5" r="1" fill="#3fa2dd"/></svg>
<div class="t" style="left:851.5px;top:14.50px;font-size:15px;color:#eef7fd;-webkit-text-stroke:0.45px #eef7fd">Помощь бухгалтера</div>
<svg class="a" style="left:1557px;top:15px;" width="20" height="20" viewBox="0 0 20 20"><circle cx="10" cy="10" r="10" fill="#ddeef9"/><path d="M7.2 7.6 C7.2 5.8 8.5 4.6 10.1 4.6 C11.8 4.6 13 5.8 13 7.3 C13 9.2 10.6 9.6 10.6 11.8 V12.3" fill="none" stroke="#4d7fa3" stroke-width="1.9"/><circle cx="10.5" cy="15.2" r="1.2" fill="#4d7fa3"/></svg>
<svg class="a" style="left:1608px;top:14px;" width="18" height="22" viewBox="0 0 18 22"><path d="M9 1.5 C9.8 1.5 10.2 2.2 10.2 3 C13.3 3.7 15 6.3 15 9.6 V14.5 L17.5 18 H0.5 L3 14.5 V9.6 C3 6.3 4.7 3.7 7.8 3 C7.8 2.2 8.2 1.5 9 1.5 Z" fill="#ddeef9"/><path d="M6.8 19.3 H11.2 C11 20.6 10.1 21.3 9 21.3 C7.9 21.3 7 20.6 6.8 19.3Z" fill="#ddeef9"/></svg>
<svg class="a" style="left:1656px;top:14px;" width="22" height="22" viewBox="0 0 22 22"><g transform="translate(11 11)"><g fill="#ddeef9"><rect x="-2.6" y="-10.4" width="5.2" height="5" rx="0.8" transform="rotate(0)"/><rect x="-2.6" y="-10.4" width="5.2" height="5" rx="0.8" transform="rotate(60)"/><rect x="-2.6" y="-10.4" width="5.2" height="5" rx="0.8" transform="rotate(120)"/><rect x="-2.6" y="-10.4" width="5.2" height="5" rx="0.8" transform="rotate(180)"/><rect x="-2.6" y="-10.4" width="5.2" height="5" rx="0.8" transform="rotate(240)"/><rect x="-2.6" y="-10.4" width="5.2" height="5" rx="0.8" transform="rotate(300)"/><circle r="7.6"/></g><circle r="3.3" fill="#3fa2dd"/></g></svg>
<div class="a" style="left:1707px;top:10px;width:30px;height:30px;background:#f5a26e;border-radius:50%"></div>
<div class="t" style="left:1711.2px;top:17.55px;font-size:14px;font-weight:700;color:#fff;letter-spacing:-0.3px">ОМ</div>
<div class="t" style="left:1748px;top:18.45px;font-size:14px;color:#f3f9fd;-webkit-text-stroke:0.45px #f3f9fd">ООО "МОЕ ДЕЛО"</div>

</body></html>
